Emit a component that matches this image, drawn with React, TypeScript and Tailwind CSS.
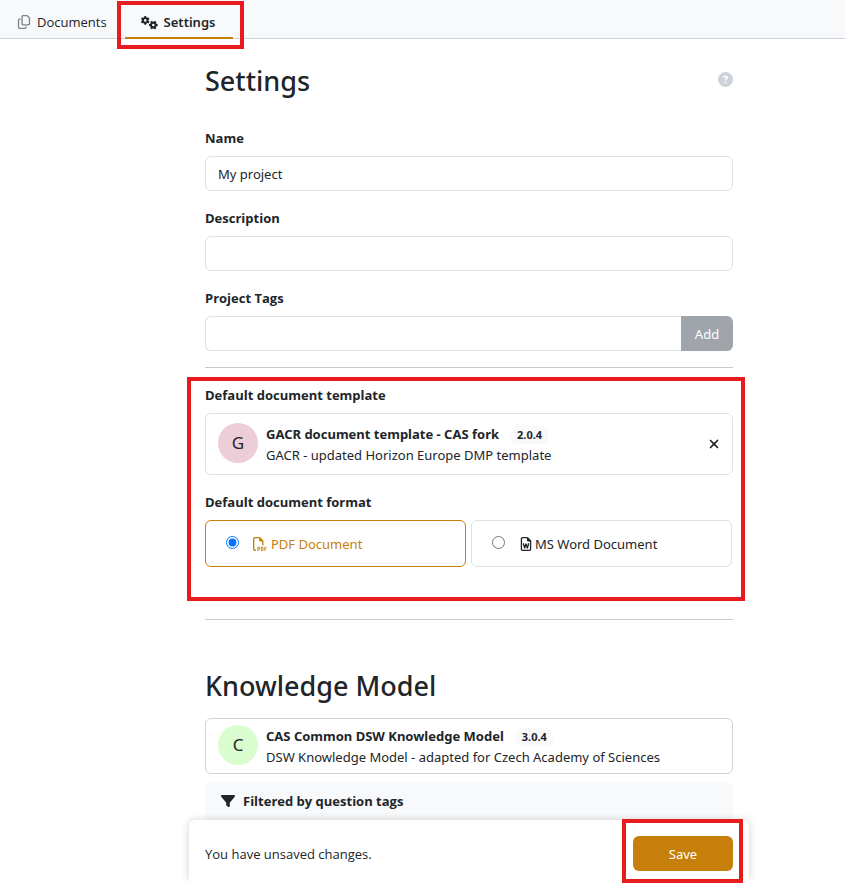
import type { ReactNode } from "react"
import { useState } from "react"
import {
  FaCircleQuestion,
  FaFilter,
  FaGears,
  FaRegCopy,
  FaRegFilePdf,
  FaRegFileWord,
  FaXmark,
} from "react-icons/fa6"

const FORMATS = [
  { id: "pdf", label: "PDF Document", icon: FaRegFilePdf },
  { id: "docx", label: "MS Word Document", icon: FaRegFileWord },
]

function Highlight({ className }: { className: string }) {
  return (
    <div
      aria-hidden="true"
      className={`pointer-events-none absolute border-4 border-[#e81b1e] ${className}`}
    />
  )
}

function Field({ id, label, children }: { id: string; label: string; children: ReactNode }) {
  return (
    <div>
      <label htmlFor={id} className="mb-[7px] block font-bold">
        {label}
      </label>
      {children}
    </div>
  )
}

interface PackageInfoProps {
  letter: string
  color: string
  name: string
  version: string
  description: string
}

function PackageInfo({ letter, color, name, version, description }: PackageInfoProps) {
  return (
    <div className="flex min-w-0 items-center gap-2 font-['Noto_Sans',sans-serif]">
      <div
        className={`mb-0.5 flex size-10 shrink-0 items-center justify-center rounded-full pb-0.5 text-[17px] ${color}`}
      >
        {letter}
      </div>
      <div className="min-w-0 pt-0.5">
        <div className="flex items-center gap-3">
          <span className="font-bold">{name}</span>
          <span className="rounded-md bg-[#f8f9fb] px-1.5 text-[11px] leading-[18px] font-bold">{version}</span>
        </div>
        <div>{description}</div>
      </div>
    </div>
  )
}

export default function App() {
  const [name, setName] = useState("My project")
  const [format, setFormat] = useState("pdf")

  return (
    <div className="bg-white font-['Open_Sans',sans-serif] text-[13px] leading-[21px] text-[#212529]">
      <nav className="flex h-[39px] border-b border-[#cfd4da] bg-[#f8f9fb]">
        <a href="#documents" className="flex items-center gap-1.5 pt-1.5 pr-[18px] pl-[17px]">
          <FaRegCopy className="size-3.5 text-[#7d8389]" />
          Documents
        </a>
        <div className="relative flex">
          <a
            href="#settings"
            aria-current="page"
            className="-mb-px flex items-center gap-1.5 border-b-2 border-[#c67f0b] pt-2 pr-[18px] pl-4 font-['Noto_Sans',sans-serif] font-semibold"
          >
            <FaGears className="size-[17px]" />
            Settings
          </a>
          <Highlight className="top-px -right-[11px] -bottom-[11px] -left-2" />
        </div>
      </nav>

      <main className="mr-24 ml-[189px]">
        <div className="px-4 pt-[25px]">
          <header className="mb-[30px] flex items-center justify-between">
            <h1 className="font-['Noto_Sans',sans-serif] text-[27px] leading-[34px] font-medium">Settings</h1>
            <button type="button" aria-label="Help" className="pb-1 text-[#cdd3da]">
              <FaCircleQuestion className="size-[15px]" />
            </button>
          </header>

          <div className="grid gap-[17px]">
            <Field id="name" label="Name">
              <input
                id="name"
                value={name}
                onChange={(e) => setName(e.target.value)}
                className="h-[35px] w-full rounded-md border border-[#dee2e6] px-3 font-['Noto_Sans',sans-serif]"
              />
            </Field>
            <Field id="description" label="Description">
              <input id="description" className="h-[35px] w-full rounded-md border border-[#dee2e6] px-3" />
            </Field>
            <Field id="tags" label="Project Tags">
              <div className="flex">
                <input
                  id="tags"
                  className="h-[35px] min-w-0 flex-1 rounded-l-md border border-r-0 border-[#dee2e6] px-3"
                />
                <button
                  type="button"
                  className="w-[52px] rounded-r-md bg-[#a0a5ab] pt-0.5 font-['Noto_Sans',sans-serif] text-white"
                >
                  Add
                </button>
              </div>
            </Field>
          </div>

          <hr className="mt-4 mb-[17px] border-[#c8c9ca]" />

          <section className="relative pb-[52px]">
            <h2 className="mb-[7px] font-bold">Default document template</h2>
            <div className="mb-[17px] flex h-[62px] items-center justify-between rounded-md border border-[#dee2e6] pr-[11px] pl-3">
              <PackageInfo
                letter="G"
                color="bg-[#edcdd8]"
                name="GACR document template - CAS fork"
                version="2.0.4"
                description="GACR - updated Horizon Europe DMP template"
              />
              <button type="button" aria-label="Clear template">
                <FaXmark className="size-3.5" />
              </button>
            </div>

            <fieldset>
              <legend className="mb-[7px] font-bold">Default document format</legend>
              <div className="grid grid-cols-2 gap-[5px] pr-px font-['Noto_Sans',sans-serif]">
                {FORMATS.map(({ id, label, icon: Icon }) => (
                  <label
                    key={id}
                    className={
                      format === id
                        ? "flex h-[47px] items-center rounded-md border border-[#c67f0b] px-5 text-[#c67f0b]"
                        : "flex h-[47px] items-center rounded-md border border-[#dee2e6] px-5"
                    }
                  >
                    <input
                      type="radio"
                      name="format"
                      value={id}
                      checked={format === id}
                      onChange={() => setFormat(id)}
                      className="mr-3.5 mb-0.5 size-[13px]"
                    />
                    <Icon className={id === "pdf" ? "mr-1 size-3.5" : "mr-0.5 size-3.5"} />
                    <span className="pt-0.5">{label}</span>
                  </label>
                ))}
              </div>
            </fieldset>
            <Highlight className="-top-2 -right-3 bottom-[18px] -left-[18px]" />
          </section>

          <hr className="border-[#c8c9ca]" />

          <section className="pt-[49px]">
            <h1 className="mb-[15px] font-['Noto_Sans',sans-serif] text-[27px] leading-[34px] font-medium">
              Knowledge Model
            </h1>
            <div className="mb-2 flex h-14 items-center rounded-md border border-[#cfd4da] px-3">
              <PackageInfo
                letter="C"
                color="bg-[#dafdcf]"
                name="CAS Common DSW Knowledge Model"
                version="3.0.4"
                description="DSW Knowledge Model - adapted for Czech Academy of Sciences"
              />
            </div>
            <div className="flex h-[38px] items-center gap-2 rounded-md bg-[#f8f9fb] px-4 font-bold">
              <FaFilter className="size-3.5" />
              Filtered by question tags
            </div>
          </section>
        </div>

        <div className="relative pb-[3px]">
          <div className="flex h-[61px] items-center justify-between rounded-t-md bg-white px-4 pt-1.5 shadow-[0_0_8px_rgba(0,0,0,0.18)] [clip-path:inset(-12px_-12px_0_-12px)]">
            <p className="pt-0.5">You have unsaved changes.</p>
            <button
              type="button"
              className="h-[35px] w-[100px] rounded-md bg-[#c67f0b] pt-0.5 font-['Noto_Sans',sans-serif] text-white"
            >
              Save
            </button>
          </div>
          <Highlight className="-top-px right-1.5 bottom-px w-[121px]" />
        </div>
      </main>
    </div>
  )
}
